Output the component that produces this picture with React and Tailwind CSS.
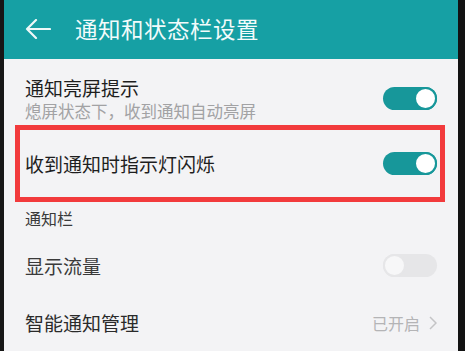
function Toggle({ on }) {
  return (
    <div
      className={
        on
          ? "w-[54px] h-[23px] rounded-full bg-[#17979a] flex items-center justify-end"
          : "w-[54px] h-[23px] rounded-full bg-[#e6e6e8] flex items-center justify-start"
      }
    >
      <div
        className={
          on
            ? "w-[23px] h-[23px] rounded-full bg-white border-[2px] border-[#17979a]"
            : "w-[23px] h-[23px] rounded-full bg-[#f7f7f8] border-[2px] border-[#e6e6e8]"
        }
      />
    </div>
  );
}

export default function App() {
  return (
    <div
      className="w-[465px] h-[351px] flex bg-[#111] overflow-hidden"
      style={{ fontFamily: '"Noto Sans CJK SC", "Noto Sans", sans-serif' }}
    >
      <div className="w-[4px] bg-[#161616]" />
      <div className="flex-1 flex flex-col bg-[#f3f3f5]">
        {/* header */}
        <div className="h-[59px] bg-[#16a0a4] flex items-center pl-[21px] pb-[2px]">
          <svg width="26" height="20" viewBox="0 0 26 20" fill="none">
            <path
              d="M25 10H2M11 1L2 10l9 9"
              stroke="#eef8f8"
              strokeWidth="2.2"
              strokeLinecap="round"
              strokeLinejoin="round"
            />
          </svg>
          <span className="ml-[24px] text-[22.5px] leading-none text-[#f2fbfb] tracking-[0.5px]">
            通知和状态栏设置
          </span>
        </div>

        {/* 通知亮屏提示 */}
        <div className="h-[66px] px-[21px] flex items-start justify-between">
          <div className="flex flex-col pt-[18px]">
            <span className="text-[19px] leading-[22px] text-[#1e1e1e]">通知亮屏提示</span>
            <span className="mt-[2px] text-[16.5px] leading-[20px] text-[#a2a2a4]">
              熄屏状态下，收到通知自动亮屏
            </span>
          </div>
          <div className="mt-[28px]">
            <Toggle on />
          </div>
        </div>

        {/* highlighted row */}
        <div className="h-[77px] ml-[11px] mr-[13px] border-[5px] border-[#f23a3c] pl-[5px] pr-[3px] flex items-center justify-between">
          <span className="text-[19px] leading-none text-[#1e1e1e]">收到通知时指示灯闪烁</span>
          <Toggle on />
        </div>

        <div className="h-[32px] px-[21px] flex items-center">
          <span className="text-[16px] leading-none text-[#3a3a3a]">通知栏</span>
        </div>

        <div className="h-[62px] px-[21px] flex items-center justify-between">
          <span className="text-[19px] leading-none text-[#3a3a3a]">显示流量</span>
          <Toggle />
        </div>

        <div className="flex-1 px-[21px] pb-[2px] flex items-center justify-between">
          <span className="text-[19px] leading-none text-[#2a2a2a]">智能通知管理</span>
          <div className="flex items-center gap-[9px]">
            <span className="text-[16px] leading-none text-[#b4b4b6]">已开启</span>
            <svg width="8" height="14" viewBox="0 0 8 14" fill="none">
              <path d="M1 1l6 6-6 6" stroke="#c4c4c6" strokeWidth="1.5" />
            </svg>
          </div>
        </div>
      </div>
      <div className="w-[7px] bg-[#121212]" />
    </div>
  );
}
